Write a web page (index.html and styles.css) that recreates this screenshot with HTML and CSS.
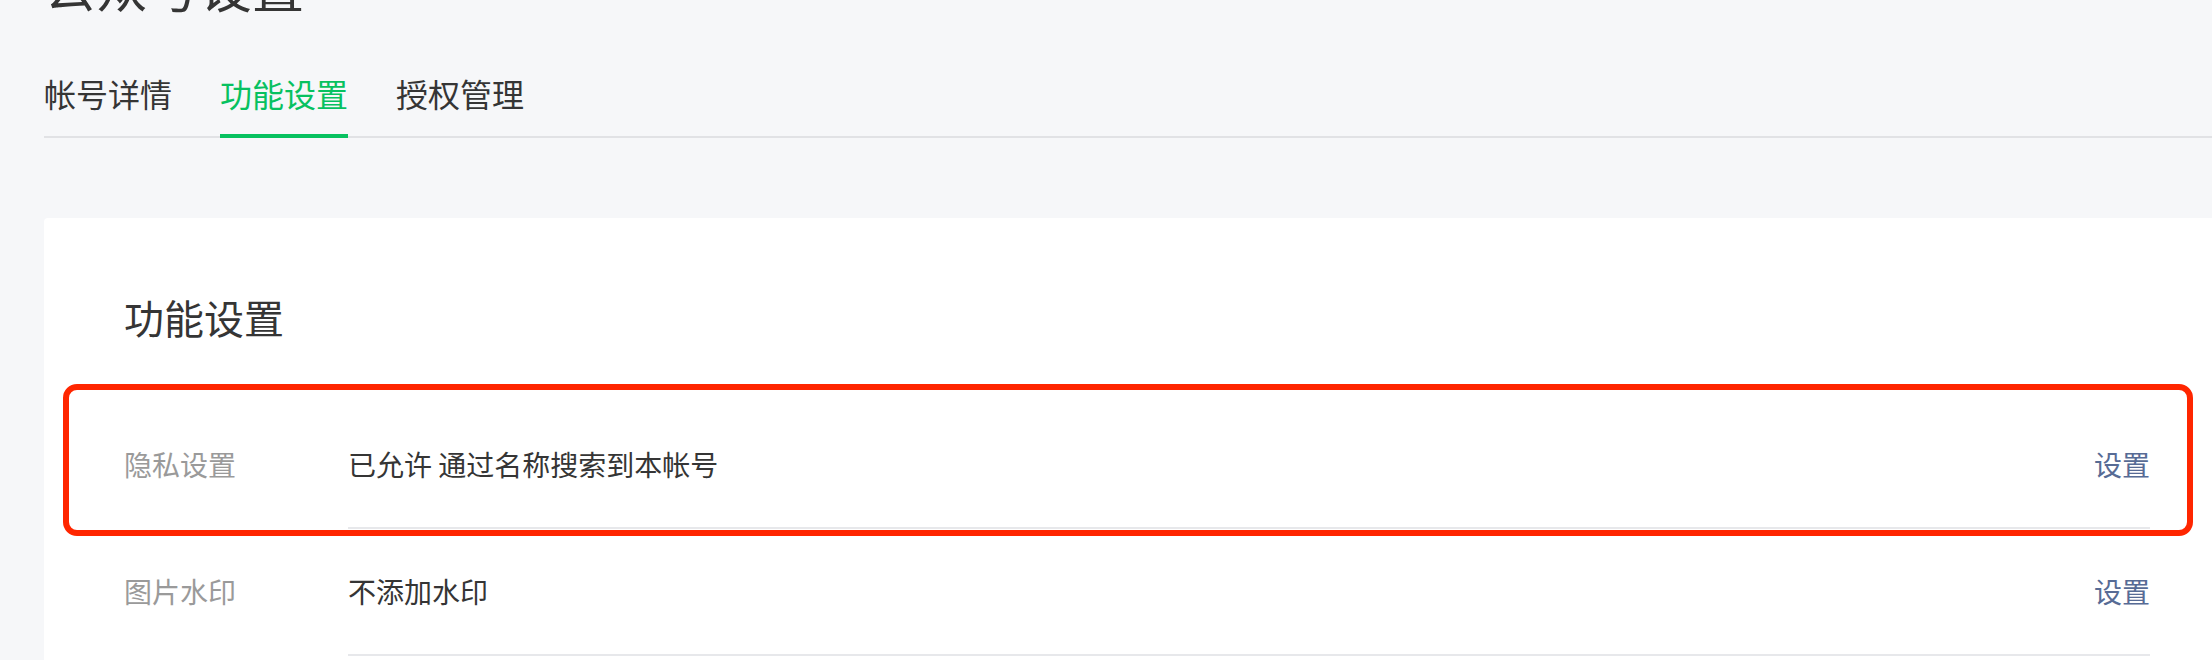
FILE: index.html
```html
<!DOCTYPE html>
<html lang="zh-CN">
<head>
<meta charset="utf-8">
<title>公众号设置</title>
<link rel="stylesheet" href="styles.css">
</head>
<body>
<div class="page">
  <h1 class="page-title">公众号设置</h1>
  <nav class="tabs">
    <a class="tab">帐号详情</a>
    <a class="tab active">功能设置</a>
    <a class="tab">授权管理</a>
  </nav>
  <section class="card">
    <h2 class="card-title">功能设置</h2>
    <div class="row">
      <div class="row-label">隐私设置</div>
      <div class="row-main">
        <span class="row-value">已允许 通过名称搜索到本帐号</span>
        <a class="row-link">设置</a>
      </div>
      <div class="highlight"></div>
    </div>
    <div class="row">
      <div class="row-label">图片水印</div>
      <div class="row-main">
        <span class="row-value">不添加水印</span>
        <a class="row-link">设置</a>
      </div>
    </div>
  </section>
</div>
</body>
</html>
```
FILE: styles.css
```css
html, body {
  margin: 0;
  overflow: hidden;
  background: #f6f7f9;
  font-family: "Noto Sans CJK SC", "Noto Sans", sans-serif;
  color: #353535;
}

.page {
  padding-left: 44px;
  width: 2186px;
}

.page-title {
  margin: -50px 0 0;
  font-size: 52px;
  line-height: 72px;
  font-weight: 400;
  color: #353535;
}

.tabs {
  display: flex;
  gap: 48px;
  margin-top: 47px;
  border-bottom: 2px solid #e1e2e5;
}

.tab {
  font-size: 32px;
  line-height: 48px;
  padding-bottom: 17px;
  border-bottom: 4px solid transparent;
  margin-bottom: -2px;
  color: #353535;
}

.tab.active {
  color: #07c160;
  border-bottom-color: #07c160;
}

.card {
  margin-top: 80px;
  background: #fff;
  border-radius: 4px;
  padding: 71px 80px 40px;
}

.card-title {
  margin: 0 0 57px;
  font-size: 40px;
  line-height: 56px;
  font-weight: 400;
  color: #353535;
}

.row {
  display: flex;
  position: relative;
  font-size: 28px;
  line-height: 45px;
}

.row-label {
  width: 224px;
  flex-shrink: 0;
  padding: 40px 0;
  color: #9a9a9a;
}

.row-main {
  flex: 1;
  display: flex;
  justify-content: space-between;
  padding: 40px 0;
  border-bottom: 2px solid #e7e8eb;
  color: #353535;
}

.row-link {
  color: #576b95;
  text-decoration: none;
}

.highlight {
  position: absolute;
  top: -18px;
  bottom: -7px;
  left: -61px;
  right: -43px;
  border: 6px solid #ff2600;
  border-radius: 14px;
  pointer-events: none;
}
```
